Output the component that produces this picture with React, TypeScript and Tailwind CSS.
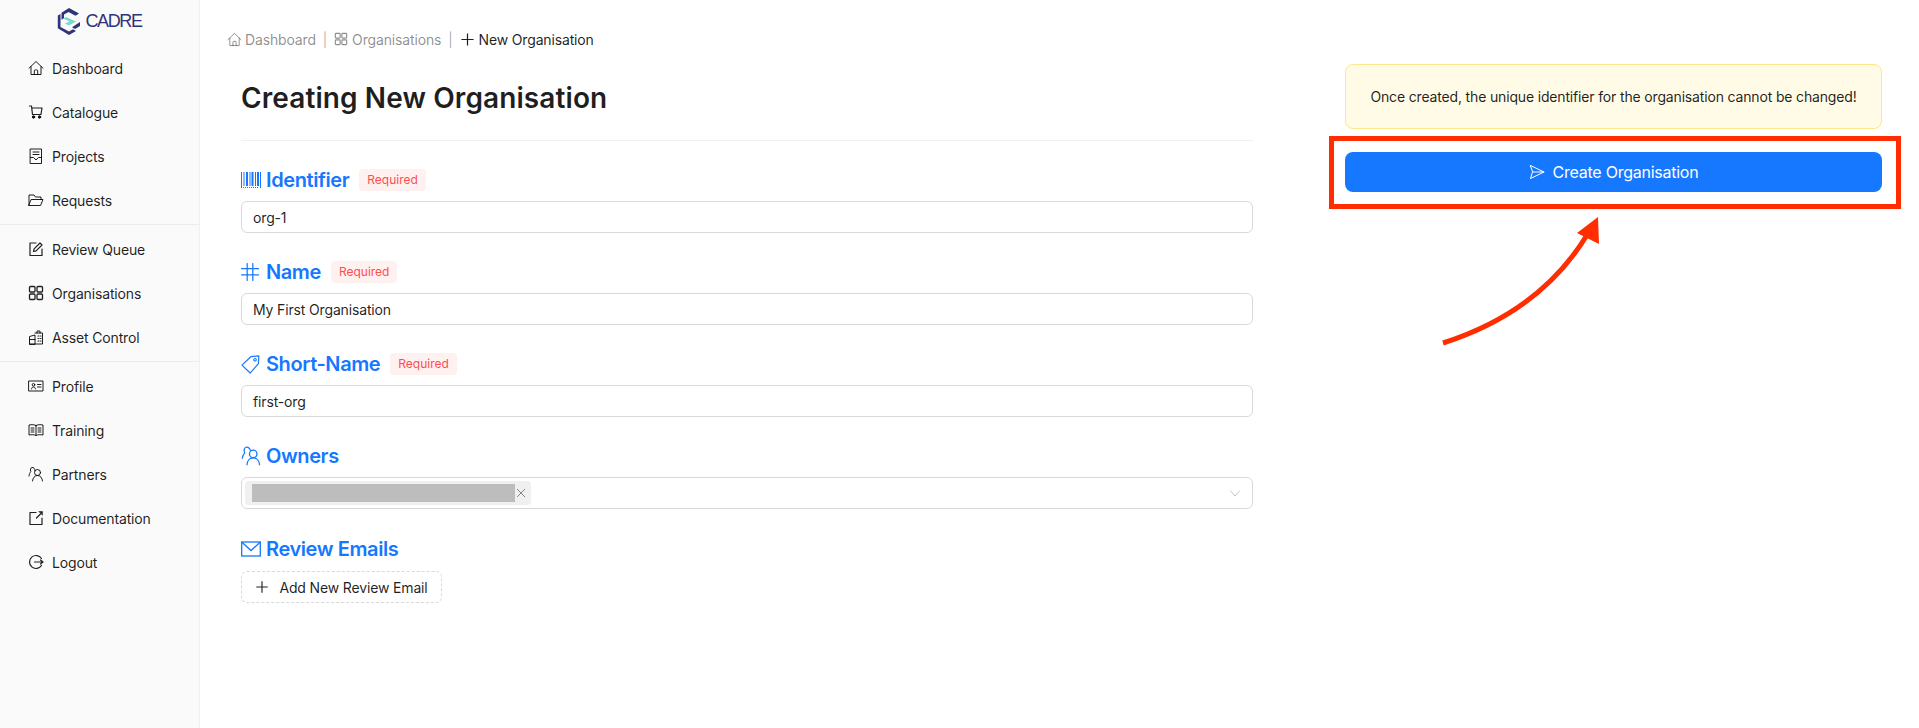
import type { ReactNode } from 'react';

function Svg({ size = 16, width, children }: { size?: number; width?: number; children: ReactNode }) {
  return (
    <svg
      viewBox={`0 0 ${width ?? 16} 16`}
      width={(size * (width ?? 16)) / 16}
      height={size}
      fill="none"
      stroke="currentColor"
      strokeWidth="1"
      strokeLinejoin="round"
      strokeLinecap="round"
    >
      {children}
    </svg>
  );
}

const HomeIcon = ({ size }: { size?: number }) => (
  <Svg size={size}>
    <path d="M1 8.2 8 1.5l7 6.7M3 6.6v7.9h10V6.6M6.3 14.5v-3.6a1 1 0 0 1 1-1h1.4a1 1 0 0 1 1 1v3.6" />
  </Svg>
);
const CartIcon = () => (
  <Svg>
    <path d="M1.5 2h2l1 8.5h8.5M4 4h10l-1 6" strokeWidth="1.2" />
    <circle cx="5.5" cy="13" r="1.2" fill="currentColor" />
    <circle cx="11.5" cy="13" r="1.2" fill="currentColor" />
  </Svg>
);
const ProjectsIcon = () => (
  <Svg>
    <rect x="2.5" y="1" width="11" height="14.5" />
    <path d="M5 4h6M5 6.5h6M2.5 9.5h3l2.5 2.5 2.5-2.5h3" />
  </Svg>
);
const FolderIcon = () => (
  <Svg>
    <path d="M1 13.5V3h5l1.5 2H13v2.5M1 13.5h11.5L15 7.5H3.5z" />
  </Svg>
);
const EditIcon = () => (
  <Svg>
    <path d="M8 2H2v12.5h12V8" strokeWidth="1.2" />
    <path d="M5.5 10.5l.6-2.6L12 2l2 2-5.9 5.9z" strokeWidth="1.2" />
  </Svg>
);
const GridIcon = ({ size }: { size?: number }) => (
  <Svg size={size}>
    <rect x="1.5" y="1.5" width="5.5" height="5.5" rx="1" strokeWidth="1.3" />
    <rect x="9" y="1.5" width="5.5" height="5.5" rx="1" strokeWidth="1.3" />
    <rect x="1.5" y="9" width="5.5" height="5.5" rx="1" strokeWidth="1.3" />
    <rect x="9" y="9" width="5.5" height="5.5" rx="1" strokeWidth="1.3" />
  </Svg>
);
const AssetIcon = () => (
  <Svg>
    <path d="M1.5 15V7.5L7 6v9zM7 4h7.5v11H1.5M9 4V2h3v2M1.5 10.5H7" />
    <path d="M10 7h1M12.5 7h.5M10 9.5h1M12.5 9.5h.5M10 12h1M12.5 12h.5" strokeWidth="1.2" />
  </Svg>
);
const ProfileIcon = () => (
  <Svg>
    <rect x="1" y="3" width="14" height="10" />
    <circle cx="5.5" cy="6.8" r="1.3" />
    <path d="M3.5 11c.3-1.5 1-2 2-2s1.7.5 2 2M9.5 6.5h3.5M9.5 9h3.5" />
  </Svg>
);
const BookIcon = () => (
  <Svg>
    <path d="M8 3.5C6.5 2.5 3.5 2.5 1 3v10c2.5-.5 5.5-.5 7 .5 1.5-1 4.500-1 7-.5V3c-2.500-.5-5.500-.5-7 .5zM8 3.500v10" />
    <path d="M3 6h3M3 8h3M3 10h3M10 6h3M10 8h3M10 10h3" />
  </Svg>
);
const PartnersIcon = ({ size }: { size?: number }) => (
  <Svg size={size}>
    <circle cx="9.5" cy="6.5" r="3" />
    <path d="M4.5 15c.3-3 2-5.5 5-5.5s4.700 2.500 5 5.500" />
    <path d="M7 4.800C6.800 2.500 5.500 1 4 1.500 2.500 1.800 2 3.500 2.800 5.500 2 6.500 1.300 8 1 10" />
  </Svg>
);
const DocsIcon = () => (
  <Svg>
    <path d="M8 2.500H2v12h12V8" strokeWidth="1.2" />
    <path d="M8.500 8l4-4" strokeWidth="1.2" />
    <path d="M11 1.500h3.500V5z" fill="currentColor" strokeWidth=".5" />
  </Svg>
);
const LogoutIcon = () => (
  <Svg>
    <path d="M13.500 4.500A6.500 6.500 0 1 0 13.500 11.500" strokeWidth="1.2" />
    <path d="M6.500 8H15M12.500 6l2.500 2-2.500 2" strokeWidth="1.2" />
  </Svg>
);
const PlusIcon = ({ size }: { size?: number }) => (
  <Svg size={size}>
    <path d="M8 1.500v13M1.500 8h13" strokeWidth="1.3" strokeLinecap="butt" />
  </Svg>
);
const BarcodeIcon = () => (
  <svg viewBox="0 0 20 16" width="20" height="16" fill="none" stroke="currentColor">
    <path strokeWidth="1" d="M.5 0v16M19.500 0v16" />
    <path strokeWidth="1" d="M3 0v14M9 0v14M14.500 0v14" />
    <path strokeWidth="2" d="M6 0v14M11.500 0v14M17 0v14" />
    <path strokeWidth="1" strokeDasharray="1 1" d="M2 15.500h16" />
  </svg>
);
const HashIcon = () => (
  <Svg size={18}>
    <path d="M5.500.5v15M10.500.5v15M.5 5h15M.5 10.500h15" strokeWidth="1.1" />
  </Svg>
);
const TagIcon = () => (
  <Svg size={19}>
    <path d="M.8 8.500 8.500 1.300l6.500-.5-.3 6.500-7 7.900z" strokeWidth="1" />
    <circle cx="11.8" cy="4" r="1.1" strokeWidth=".9" />
  </Svg>
);
const OwnersIcon = () => (
  <Svg size={20}>
    <circle cx="9.8" cy="6.3" r="3" />
    <path d="M4.800 15c.2-3 2-5.500 5-5.500s4.800 2.500 5 5.500" />
    <path d="M7.500 3.500C7 1.500 5.500.5 4 1 2.500 1.500 2 3.500 3 5.500 2 6.500 1.300 8 1 9.800" />
  </Svg>
);
const MailIcon = () => (
  <svg viewBox="0 0 20 16" width="20" height="16" fill="none" stroke="currentColor" strokeWidth="1.3">
    <rect x=".7" y="1" width="18.6" height="14" />
    <path d="M.7 1 10 9.500 19.300 1" />
  </svg>
);
const SendIcon = () => (
  <Svg>
    <path d="M1.500 1.500 15 8 1.500 14.500 3.500 8zM3.500 8H15" />
  </Svg>
);
const CloseIcon = () => (
  <Svg size={10}>
    <path d="M2 2l12 12M14 2 2 14" strokeWidth="1.6" />
  </Svg>
);
const ChevronIcon = () => (
  <Svg size={12}>
    <path d="M2 5l6 7 6-7" strokeWidth="1.2" />
  </Svg>
);

function Logo() {
  return (
    <div className="flex items-center justify-center h-[41px] pt-[1px]">
      <svg viewBox="0 0 24 27" width="24" height="27">
        <path fill="#2f3379" d="M12 0l10 5.500-3.500 2.200L11.500 4 7 6.500v3.800l-2.500 1.500V4.800zM.8 7.500l2.700-1.600v13.200L12 23.500l4-2.300 3 1.700-7 4L.8 20.300zM23 14v4l-5 3-3-1.800z" />
        <path fill="#7fd6cf" d="M6 10.500 9 9l10 4.500-7 4-4-2 4.500-2z" />
      </svg>
      <span className="ml-[4px] text-[18px] leading-none tracking-[-1.4px] text-[#2f3379] font-['Liberation_Sans',sans-serif]">
        CADRE
      </span>
    </div>
  );
}

function NavItem({ icon, label }: { icon: ReactNode; label: string }) {
  return (
    <div className="flex items-center h-[44px] pl-[28px]">
      <span className="w-[24px] flex items-center">{icon}</span>
      <span>{label}</span>
    </div>
  );
}

function Sidebar() {
  return (
    <aside className="w-[200px] shrink-0 bg-[#fafafa] border-r border-[#f0f0f0] text-[14px] tracking-[-0.15px] text-[#000000e0]">
      <Logo />
      <div className="pt-[5px] pb-[2px] border-b border-[#ececec]">
        <NavItem icon={<HomeIcon />} label="Dashboard" />
        <NavItem icon={<CartIcon />} label="Catalogue" />
        <NavItem icon={<ProjectsIcon />} label="Projects" />
        <NavItem icon={<FolderIcon />} label="Requests" />
      </div>
      <div className="pt-[2px] pb-[2px] border-b border-[#ececec]">
        <NavItem icon={<EditIcon />} label="Review Queue" />
        <NavItem icon={<GridIcon />} label="Organisations" />
        <NavItem icon={<AssetIcon />} label="Asset Control" />
      </div>
      <div className="pt-[2px]">
        <NavItem icon={<ProfileIcon />} label="Profile" />
        <NavItem icon={<BookIcon />} label="Training" />
        <NavItem icon={<PartnersIcon />} label="Partners" />
        <NavItem icon={<DocsIcon />} label="Documentation" />
        <NavItem icon={<LogoutIcon />} label="Logout" />
      </div>
    </aside>
  );
}

function Required() {
  return (
    <span className="ml-[10px] h-[22px] px-[8px] flex items-center rounded-[4px] bg-[#fff1f0] text-[12px] font-normal tracking-normal text-[#ff4d4f]">
      Required
    </span>
  );
}

function FieldLabel({ icon, label, required }: { icon: ReactNode; label: string; required?: boolean }) {
  return (
    <div className="flex items-center h-[28px] text-[20px] font-semibold tracking-[-0.4px] text-[#1677ff]">
      <span className="w-[25px] flex items-center">{icon}</span>
      <span>{label}</span>
      {required && <Required />}
    </div>
  );
}

function TextField({ value }: { value: string }) {
  return (
    <div className="h-[32px] mt-[7px] px-[11px] flex items-center rounded-[6px] border border-[#d9d9d9] text-[14px] tracking-[-0.15px] text-[#000000e0]">
      {value}
    </div>
  );
}

function Breadcrumbs() {
  return (
    <div className="flex items-center h-[22px] text-[14px] tracking-[-0.15px] text-[#00000073] pl-[27px]">
      <span className="mr-[3px]">
        <HomeIcon size={15} />
      </span>
      <span>Dashboard</span>
      <span className="mx-[7px] font-light">|</span>
      <span className="mr-[4px]">
        <GridIcon size={14} />
      </span>
      <span>Organisations</span>
      <span className="mx-[7px] font-light">|</span>
      <span className="mr-[4px] text-[#000000e0]">
        <PlusIcon size={15} />
      </span>
      <span className="text-[#000000e0]">New Organisation</span>
    </div>
  );
}

function Annotation() {
  return (
    <>
      <div className="absolute left-[1329px] top-[136px] w-[572px] h-[73px] border-[5px] border-[#ff2d00]" />
      <svg className="absolute left-[1430px] top-[205px] w-[180px] h-[150px]" viewBox="1430 205 180 150" fill="none">
        <path d="M1443 343 Q1540 312 1587 235" stroke="#ff2d00" strokeWidth="5" />
        <path d="M1598 217 L1577 233 L1599 244 Z" fill="#ff2d00" />
      </svg>
    </>
  );
}

export default function App() {
  return (
    <div className="relative flex h-[728px] bg-white font-['Inter',sans-serif] overflow-hidden">
      <Sidebar />
      <main className="flex-1 pt-[28px]">
        <Breadcrumbs />
        <div className="flex pl-[41px] pt-[9px]">
          <section className="w-[1012px] shrink-0">
            <h1 className="h-[60px] mt-[9px] flex items-center text-[28px] font-semibold text-[#000000e0] tracking-[0.1px]">
              Creating New Organisation
            </h1>
            <div className="mt-[12px] mb-[25px] border-t border-[#f0f0f0]" />

            <FieldLabel icon={<BarcodeIcon />} label="Identifier" required />
            <TextField value="org-1" />

            <div className="mt-[25px]">
              <FieldLabel icon={<HashIcon />} label="Name" required />
              <TextField value="My First Organisation" />
            </div>

            <div className="mt-[25px]">
              <FieldLabel icon={<TagIcon />} label="Short-Name" required />
              <TextField value="first-org" />
            </div>

            <div className="mt-[25px]">
              <FieldLabel icon={<OwnersIcon />} label="Owners" />
              <div className="h-[32px] mt-[7px] pl-[3px] pr-[11px] flex items-center justify-between rounded-[6px] border border-[#d9d9d9]">
                <div className="h-[24px] w-[286px] pl-[7px] pr-[5px] flex items-center justify-between rounded-[4px] bg-[#f0f0f0]">
                  <div className="h-[18px] w-[263px] bg-[#bdbdbd]" />
                  <span className="text-[#00000073]">
                    <CloseIcon />
                  </span>
                </div>
                <span className="text-[#00000040]">
                  <ChevronIcon />
                </span>
              </div>
            </div>

            <div className="mt-[26px]">
              <FieldLabel icon={<MailIcon />} label="Review Emails" />
              <button className="h-[32px] w-[201px] mt-[8px] flex items-center justify-center gap-[10px] rounded-[6px] border border-dashed border-[#d9d9d9] text-[14px] tracking-[-0.15px] text-[#000000e0]">
                <PlusIcon size={14} />
                Add New Review Email
              </button>
            </div>
          </section>

          <section className="w-[537px] ml-[92px] shrink-0">
            <div className="h-[65px] mt-[5px] flex items-center justify-center rounded-[8px] border border-[#ffe58f] bg-[#fffbe6] text-[14px] tracking-[-0.16px] text-[#000000e0]">
              Once created, the unique identifier for the organisation cannot be changed!
            </div>
            <button className="w-full h-[40px] mt-[23px] flex items-center justify-center gap-[8px] rounded-[8px] bg-[#1677ff] text-[16px] tracking-[-0.25px] text-white">
              <SendIcon />
              Create Organisation
            </button>
          </section>
        </div>
      </main>
      <Annotation />
    </div>
  );
}
